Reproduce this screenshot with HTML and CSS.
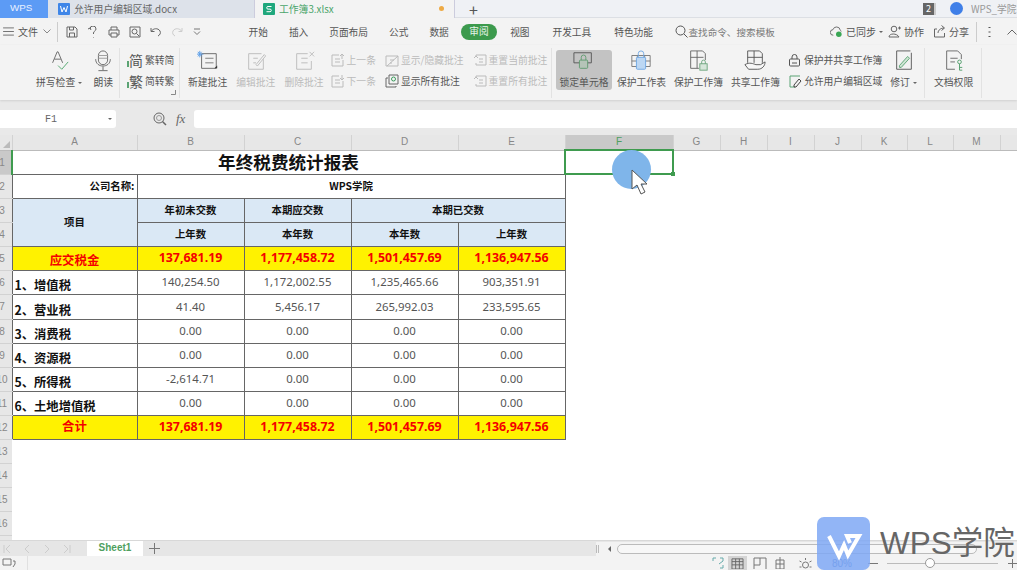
FILE: index.html
```html
<!DOCTYPE html>
<html lang="en">
<head>
    <meta charset="utf-8">
    <title>工作簿3.xlsx</title>
    <link rel="stylesheet" href="styles.css">
</head>
<body>
<div class="page">

    <!-- title bar -->
    <div class="tabbar">
        <div class="tab_wps">WPS</div>
        <div class="tab_doc">
            <svg class="tab_icon" viewBox="0 0 12 12"><rect width="12" height="12" rx="1" fill="#3f86e8"/><path d="M2.5 3 4 9 6 4.5 8 9 9.5 3" fill="none" stroke="#fff"/></svg>
            <span>允许用户编辑区域.docx</span>
        </div>
        <div class="tab_xls">
            <svg class="tab_icon" viewBox="0 0 12 12"><rect width="12" height="12" rx="1" fill="#1fa77c"/><path d="M8.5 3.5H5a1.3 1.3 0 0 0 0 2.6h2a1.3 1.3 0 0 1 0 2.6H3.5" fill="none" stroke="#fff"/></svg>
            <span class="xls_name">工作簿3.xlsx</span>
            <i class="dot"></i>
        </div>
        <div class="tab_plus">+</div>
        <div class="tabbar_right">
            <span class="badge">2</span>
            <span class="avatar"></span>
            <span class="user">WPS_学院</span>
        </div>
    </div>

    <!-- menu row -->
    <div class="menubar">
        <svg class="qa burger" viewBox="0 0 12 10"><path d="M0 1h12M0 5h12M0 9h12" stroke="#666"/></svg>
        <span class="file">文件</span>
        <svg class="qa chev" viewBox="0 0 8 5"><path d="M.5.5 4 4 7.500.5" fill="none" stroke="#888"/></svg>
        <i class="menu_sep"></i>
        <svg class="qa" viewBox="0 0 12 12"><path d="M1 1h8l2 2v8H1zM3.500 1v3h4V1M3.500 11V7h5v4" fill="none" stroke="#666"/></svg>
        <svg class="qa" viewBox="0 0 12 12"><path d="M3 3a3 3 0 0 1 6 0c0 2-2.500 2-2.500 4v1M6.500 11v.5M1 3l2-1 1 2" fill="none" stroke="#666"/></svg>
        <svg class="qa" viewBox="0 0 12 12"><path d="M3 4V1h6v3M3 9H1V4h10v5H9M3 7h6v4H3z" fill="none" stroke="#666"/></svg>
        <svg class="qa" viewBox="0 0 12 12"><path d="M1 1h10v10H1zM3 5.500a2.500 2.500 0 1 0 5 0 2.500 2.500 0 1 0-5 0M7.500 7.500 10 10" fill="none" stroke="#666"/></svg>
        <svg class="qa" viewBox="0 0 12 12"><path d="M1 2v3.500h3.500M1.500 5C3 2.500 8 1.500 10 5c1 2 0 4-2 5" fill="none" stroke="#666"/></svg>
        <svg class="qa" viewBox="0 0 12 12"><path d="M11 2v3.500H7.500M10.500 5C9 2.500 4 1.500 2 5c-1 2 0 4 2 5" fill="none" stroke="#ccc"/></svg>
        <svg class="qa small_qa" viewBox="0 0 8 8"><path d="M1 1h6M1 3.500 4 6.500 7 3.500" fill="none" stroke="#777"/></svg>

        <div class="menu_tabs">
            <span>开始</span><span>插入</span><span>页面布局</span><span>公式</span><span>数据</span>
            <span class="pill">审阅</span>
            <span class="wide">视图</span><span class="wide">开发工具</span><span class="wide">特色功能</span>
        </div>
        <div class="search">
            <svg viewBox="0 0 13 13"><circle cx="5.500" cy="5.500" r="4.500" fill="none" stroke="#555"/><path d="M9 9l3.500 3.500" stroke="#555"/></svg>
            <span>查找命令、搜索模板</span>
        </div>
        <div class="menu_right">
            <svg class="mr_icon" viewBox="0 0 14 13"><path d="M3.500 10.500a3 3 0 0 1-.3-6A4 4 0 0 1 11 5a3 3 0 0 1 1 1.500" fill="none" stroke="#666"/><circle cx="9.500" cy="9.500" r="3" fill="#3aa655"/></svg>
            <span>已同步</span><i class="caret"></i>
            <svg class="mr_icon mr_gap" viewBox="0 0 13 13"><circle cx="6" cy="4" r="2.800" fill="none" stroke="#666"/><path d="M1 12c0-4 8-4 10 0zM10 3h3M11.500 1.500v3" fill="none" stroke="#666"/></svg>
            <span>协作</span>
            <svg class="mr_icon mr_gap2" viewBox="0 0 13 13"><path d="M4 4H1.500v8h10V8M5 8c0-3 3-5 6-5M8.500 .5 11.500 3 8.500 5.500" fill="none" stroke="#666"/></svg>
            <span>分享</span>
            <i class="menu_sep sep_right"></i>
            <svg class="mr_dots" viewBox="0 0 3 12"><path d="M1.500 1v1M1.500 5.500v1M1.500 10v1" stroke="#555" stroke-width="2"/></svg>
            <svg class="mr_up" viewBox="0 0 10 6"><path d="M.5 5.500 5 1l4.500 4.500" fill="none" stroke="#666"/></svg>
        </div>
    </div>

    <!-- ribbon -->
    <div class="ribbon">
        <div class="group g1">
            <div class="big">
                <svg viewBox="0 0 24 24"><path d="M5 14 10 2h1l5 12M7 10h7" fill="none" stroke="#666"/><path d="M11 17l4 4 7-8" fill="none" stroke="#4ea56b"/></svg>
                <span>拼写检查<i class="caret"></i></span>
            </div>
            <div class="big">
                <svg viewBox="0 0 24 24"><rect x="7" y="1" width="10" height="15" rx="5" fill="none" stroke="#666"/><path d="M7 6h10M7 9h10" stroke="#999"/><path d="M4 10c0 10 16 10 16 0M12 18v4M7 22.500h10" fill="none" stroke="#666"/></svg>
                <span>朗读</span>
            </div>
        </div>
        <div class="group g2">
            <div class="smalls">
                <div class="small"><i class="green_arrow"></i><b class="glyph">简</b><span>繁转简</span></div>
                <div class="small"><i class="green_arrow"></i><b class="glyph">繁</b><span>简转繁</span></div>
            </div>
            <svg class="corner" viewBox="0 0 5 5"><path d="M4.500 0v4.500H0" fill="none" stroke="#888"/></svg>
        </div>
        <div class="group g3">
            <div class="big">
                <svg viewBox="0 0 24 24"><path d="M5 4h16v16H5z" fill="none" stroke="#666"/><path d="M9 9h9M9 14h9" stroke="#777"/><path d="M3 1v7M0 4.500h7M1 2l4 5M5 2 1 7" stroke="#5b9ee8"/><path d="M19 20h3v-3z" fill="#333"/></svg>
                <span>新建批注</span>
            </div>
            <div class="big off">
                <svg viewBox="0 0 24 24"><path d="M18 4H4v17h16V10M9 9h5M9 14h3M12 16l9-11 1.500 1.500-9 11z" fill="none" stroke="#bbb"/></svg>
                <span>编辑批注</span>
            </div>
            <div class="big off">
                <svg viewBox="0 0 24 24"><path d="M16 4H4v17h16V12M9 9h7M9 14h7M18 2l5 5M23 2l-5 5" fill="none" stroke="#bbb"/></svg>
                <span>删除批注</span>
            </div>
            <div class="smalls pull">
                <div class="small off"><svg viewBox="0 0 14 14"><path d="M8 2H1v11h11V7M4 6h5M4 9h5M11 1v5M9 3l2-2 2 2" fill="none" stroke="#bbb"/></svg><span>上一条</span></div>
                <div class="small off"><svg viewBox="0 0 14 14"><path d="M8 2H1v11h11V7M4 6h5M4 9h5M11 1v5M9 4l2 2 2-2" fill="none" stroke="#bbb"/></svg><span>下一条</span></div>
            </div>
            <div class="smalls">
                <div class="small off"><svg viewBox="0 0 14 14"><path d="M1 3h12v10H1zM2 13 13 3M5 7h4M5 10h2" fill="none" stroke="#bbb"/></svg><span>显示/隐藏批注</span></div>
                <div class="small"><svg viewBox="0 0 14 14"><path d="M3 4H1v9h10v-1" fill="none" stroke="#666"/><path d="M4 1h9v9H4z" fill="none" stroke="#666"/><circle cx="8.500" cy="5" r="2" fill="none" stroke="#3a9a5b"/></svg><span>显示所有批注</span></div>
            </div>
            <div class="smalls">
                <div class="small off"><svg viewBox="0 0 14 14"><path d="M3 4V2h10v10H3v-2M6 6h4M6 9h4M1 5l2-2 2 2" fill="none" stroke="#bbb"/></svg><span>重置当前批注</span></div>
                <div class="small off"><svg viewBox="0 0 14 14"><path d="M3 4V2h10v10H3v-2M6 6h4M6 9h4M1 5l2-2 2 2" fill="none" stroke="#bbb"/></svg><span>重置所有批注</span></div>
            </div>
        </div>
        <div class="group g4">
            <div class="big locked">
                <svg viewBox="0 0 24 24"><path d="M1 3h19v11H1z" fill="none" stroke="#555"/><rect x="7" y="11" width="9" height="9" rx="1" fill="#b5c4b8" stroke="#5f9a70"/><path d="M9 11V8a2.500 2.500 0 0 1 5 0v3" fill="none" stroke="#5f9a70"/></svg>
                <span>锁定单元格</span>
            </div>
            <div class="big">
                <svg viewBox="0 0 24 24"><path d="M2 6h20v12H2zM8 6v12M16 6v12M2 12h20" fill="none" stroke="#777"/><rect x="7" y="8" width="10" height="13" rx="1" fill="#bcd7f3" stroke="#6ea7e4"/><path d="M9 8V4a3 3 0 0 1 6 0v4" fill="none" stroke="#6ea7e4"/></svg>
                <span>保护工作表</span>
            </div>
            <div class="big">
                <svg viewBox="0 0 24 24"><path d="M17 1H4v19h9M17 1l3 3v7M4 8h14M11 1v19" fill="none" stroke="#666"/><rect x="14" y="15" width="8" height="7" fill="#d6e6da" stroke="#6ba57d"/><path d="M16 15v-2a2 2 0 0 1 4 0v2" fill="none" stroke="#6ba57d"/></svg>
                <span>保护工作簿</span>
            </div>
            <div class="big">
                <svg viewBox="0 0 24 24"><path d="M17 1H4v13M17 1l3 3v10M4 8h16M11 1v13" fill="none" stroke="#555"/><path d="M1 16c5-3 9-1 12 0h5l5-3c0 4-3 8-8 8H5z" fill="#f7f7f7" stroke="#555"/></svg>
                <span>共享工作簿</span>
            </div>
            <div class="smalls">
                <div class="small"><svg viewBox="0 0 14 14"><rect x="1.500" y="6" width="10" height="7" rx="1" fill="none" stroke="#555"/><path d="M4 6V4a2.500 2.500 0 0 1 5 0v2M4 10h5" fill="none" stroke="#555"/></svg><span>保护并共享工作簿</span></div>
                <div class="small"><svg viewBox="0 0 14 14"><path d="M2 2h10M2 2v11M2 13h5" stroke="#5ba374" fill="none"/><path d="M6 11 11 5l2 2-5 6H6z" fill="none" stroke="#444"/></svg><span>允许用户编辑区域</span></div>
            </div>
            <div class="big">
                <svg viewBox="0 0 24 24"><path d="M19 1H4v20h16V3" fill="none" stroke="#555"/><path d="M7 17 16 7l2 2-9 10H7z" fill="#cfe6d4" stroke="#5ba374"/></svg>
                <span>修订<i class="caret"></i></span>
            </div>
        </div>
        <div class="group g5">
            <div class="big">
                <svg viewBox="0 0 24 24"><path d="M16 1H4v20h9M16 1l4 4v5M8 9h8M8 13h5" fill="none" stroke="#666"/><circle cx="18" cy="13" r="2" fill="none" stroke="#4f9c69"/><path d="M18 15v7M18 19h3M18 22h3" fill="none" stroke="#4f9c69"/></svg>
                <span>文档权限</span>
            </div>
        </div>
    </div>

    <!-- formula bar -->
    <div class="formula">
        <div class="namebox"><span>F1</span><i class="caret"></i></div>
        <svg class="zoom_icon" viewBox="0 0 14 14"><circle cx="6" cy="6" r="5" fill="none" stroke="#666"/><circle cx="6" cy="6" r="2.500" fill="none" stroke="#999"/><path d="M9.500 9.500 13 13" stroke="#666" stroke-width="1.500"/></svg>
        <span class="fx">fx</span>
        <div class="input"></div>
    </div>

    <!-- grid -->
    <div class="sheet">
        <table class="grid">
            <colgroup>
                <col class="c_rh"><col class="c_a"><col class="c_n"><col class="c_n"><col class="c_n"><col class="c_n"><col class="c_f">
                <col class="c_g"><col class="c_g"><col class="c_g"><col class="c_g"><col class="c_k"><col class="c_k"><col class="c_g"><col class="c_z">
            </colgroup>
            <tr class="head">
                <th class="corner_cell"><i class="tri"></i></th><th>A</th><th>B</th><th>C</th><th>D</th><th>E</th>
                <th class="head_on">F</th><th>G</th><th>H</th><th>I</th><th>J</th><th>K</th><th>L</th><th>M</th><th></th>
            </tr>
            <tr><th class="rh rh_on"><span>1</span></th><td colspan="5" class="title">年终税费统计报表</td><td class="selected"></td></tr>
            <tr><th class="rh"><span>2</span></th><td class="right b">公司名称:</td><td colspan="4" class="b">WPS学院</td></tr>
            <tr class="blue"><th class="rh"><span>3</span></th><td rowspan="2" class="b">项目</td><td class="b">年初未交数</td><td class="b">本期应交数</td><td colspan="2" class="b">本期已交数</td></tr>
            <tr class="blue"><th class="rh"><span>4</span></th><td class="b">上年数</td><td class="b">本年数</td><td class="b">本年数</td><td class="b">上年数</td></tr>
            <tr class="total"><th class="rh"><span>5</span></th><td class="low">应交税金</td><td>137,681.19</td><td>1,177,458.72</td><td>1,501,457.69</td><td>1,136,947.56</td></tr>
            <tr><th class="rh"><span>6</span></th><td class="item">1、增值税</td><td>140,254.50</td><td>1,172,002.55</td><td>1,235,465.66</td><td>903,351.91</td></tr>
            <tr class="tall"><th class="rh"><span>7</span></th><td class="item">2、营业税</td><td>41.40</td><td>5,456.17</td><td>265,992.03</td><td>233,595.65</td></tr>
            <tr><th class="rh"><span>8</span></th><td class="item">3、消费税</td><td>0.00</td><td>0.00</td><td>0.00</td><td>0.00</td></tr>
            <tr><th class="rh"><span>9</span></th><td class="item">4、资源税</td><td>0.00</td><td>0.00</td><td>0.00</td><td>0.00</td></tr>
            <tr><th class="rh"><span>10</span></th><td class="item">5、所得税</td><td>-2,614.71</td><td>0.00</td><td>0.00</td><td>0.00</td></tr>
            <tr><th class="rh"><span>11</span></th><td class="item">6、土地增值税</td><td>0.00</td><td>0.00</td><td>0.00</td><td>0.00</td></tr>
            <tr class="total"><th class="rh"><span>12</span></th><td>合计</td><td>137,681.19</td><td>1,177,458.72</td><td>1,501,457.69</td><td>1,136,947.56</td></tr>
            <tr class="empty"><th class="rh"><span>13</span></th></tr>
            <tr class="empty"><th class="rh"><span>14</span></th></tr>
            <tr class="empty"><th class="rh"><span>15</span></th></tr>
            <tr class="empty"><th class="rh"><span>16</span></th></tr>
            <tr class="empty"><th class="rh"><span>17</span></th></tr>
        </table>
    </div>

    <!-- sheet tabs -->
    <div class="sheetbar">
        <div class="nav">
            <svg viewBox="0 0 8 10"><path d="M1 1v8M7 1 3 5l4 4" fill="none" stroke="#ccc"/></svg>
            <svg viewBox="0 0 8 10"><path d="M6 1 2 5l4 4" fill="none" stroke="#ccc"/></svg>
            <svg viewBox="0 0 8 10"><path d="M2 1l4 4-4 4" fill="none" stroke="#ccc"/></svg>
            <svg viewBox="0 0 8 10"><path d="M7 1v8M1 1l4 4-4 4" fill="none" stroke="#ccc"/></svg>
        </div>
        <div class="sheet_tab">Sheet1</div>
        <svg class="sheet_add" viewBox="0 0 11 11"><path d="M5.500 0v11M0 5.500h11" stroke="#777"/></svg>
        <div class="hscroll">
            <i class="grip"></i>
            <i class="left_arrow"></i>
            <div class="thumb"></div>
        </div>
    </div>

    <!-- status bar -->
    <div class="status">
        <svg class="st_left" viewBox="0 0 14 10"><path d="M1 1h8v6H1zM11 3h2v3l-2 3" fill="none" stroke="#777"/></svg>
        <i class="st_sep"></i>
        <div class="st_right">
            <svg class="st_fit" viewBox="0 0 12 12"><path d="M1 4V1h3M11 8v3H8M8 1h3v3L7 7" fill="none" stroke="#6aa"/></svg>
            <svg class="st_on" viewBox="0 0 16 13"><path d="M2 2h12v11H2zM2 5h12M2 8.500h12M6 2v11M10 2v11" fill="none" stroke="#666"/></svg>
            <svg class="st_page" viewBox="0 0 14 12"><path d="M1 1h12M1 1v11M7 1v7H1M13 1v11" fill="none" stroke="#777"/></svg>
            <svg class="st_read" viewBox="0 0 14 12"><path d="M3 3h8v9H3zM3 7h8M7 0v12" fill="none" stroke="#777"/></svg>
            <svg class="st_eye" viewBox="0 0 14 12"><circle cx="7" cy="8" r="3" fill="none" stroke="#777"/><path d="M7 1v2M1 4l2 1M13 4l-2 1M1 10h2M13 10h-2" stroke="#777"/></svg>
            <span class="zoom_val">80%</span>
            <div class="slider"><i class="minus"></i><div class="track"><i class="knob"></i></div><i class="plus"></i></div>
        </div>
    </div>

    <!-- things lying over the sheet -->
    <div class="handle"></div>
    <div class="click_dot"></div>
    <svg class="cursor" viewBox="0 0 16 27"><path d="M1 1v19l5-4 4 9 4-2-4-8h6z" fill="#fff" stroke="#555"/></svg>
    <div class="mark">
        <svg class="mark_logo" viewBox="0 0 53 53"><rect width="53" height="53" rx="7" fill="#7fa8f5" opacity=".85"/><path d="M12 19 22 39 27 28 31 38 42 19H30L33 26" fill="none" stroke="#fff" stroke-width="4"/></svg>
        <span class="mark_text">WPS学院</span>
    </div>
</div>
</body>
</html>
```

FILE: styles.css
```css
*{
    box-sizing:border-box;
}
body{
    margin:0;
    font-family:"Noto Sans CJK SC","Noto Sans",sans-serif;
    color:#555;
    font-size:10px;
    overflow:hidden;
}
i{
    display:block;
    font-style:normal;
}
.page{
    position:relative;
    width:1017px;
    height:570px;
    overflow:hidden;
    display:flex;
    flex-direction:column;
    background-color:#f3f3f3;
}

/* title bar */
.tabbar{
    height:18px;
    display:flex;
    align-items:center;
    background-color:#eff1f5;
    border-bottom:1px solid #dcdfe4;
    font-size:9.8px;
}
.tab_wps{
    width:48px;
    height:18px;
    padding-left:10px;
    line-height:16px;
    background-color:#5c9bf5;
    color:#e8f0ff;
    font-family:"Liberation Sans",sans-serif;
}
.tab_doc{
    width:206px;
    height:18px;
    padding-left:10px;
    display:flex;
    align-items:center;
    background-color:#dde2ea;
    color:#666;
}
.tab_icon{
    width:12px;
    height:12px;
    margin-right:4px;
    flex:none;
}
.tab_xls{
    width:201px;
    height:18px;
    padding-left:8px;
    display:flex;
    align-items:center;
    background-color:#f3f3f3;
    border-left:1px solid #ccd;
    border-right:1px solid #ccd;
}
.xls_name{
    color:#4aa56b;
}
.dot{
    width:5px;
    height:5px;
    margin-left:auto;
    margin-right:10px;
    border-radius:3px;
    background-color:#eeaa44;
}
.tab_plus{
    margin-left:14px;
    font-size:16px;
    line-height:18px;
    height:18px;
    color:#555;
}
.tabbar_right{
    margin-left:auto;
    display:flex;
    align-items:center;
}
.badge{
    width:13px;
    height:12px;
    line-height:12px;
    text-align:center;
    background-color:#666;
    color:#fff;
    font-size:9px;
    border-right:2px solid #ccc;
}
.avatar{
    width:13px;
    height:13px;
    margin-left:14px;
    border-radius:7px;
    background-color:#3f7fe8;
}
.user{
    margin-left:8px;
    width:46px;
    white-space:nowrap;
    overflow:hidden;
    color:#999;
}

/* menu row */
.menubar{
    height:27px;
    padding-left:3px;
    display:flex;
    align-items:center;
    background-color:#f3f3f3;
}
.qa{
    width:12px;
    height:12px;
    margin-right:9px;
    flex:none;
}
.burger{
    width:11px;
    height:9px;
    margin-right:4px;
}
.file{
    width:20px;
}
.chev{
    width:8px;
    height:5px;
    margin-left:5px;
    margin-right:6px;
}
.menu_sep{
    width:1px;
    height:20px;
    margin-right:8px;
    background-color:#ccc;
}
.small_qa{
    width:8px;
    height:8px;
    margin-left:1px;
    margin-right:0;
}
.menu_tabs{
    margin-left:37px;
    display:flex;
    align-items:center;
    font-size:9.7px;
    color:#555;
}
.menu_tabs span{
    padding:0 10.5px;
}
.menu_tabs .wide{
    padding:0 11.5px;
}
.menu_tabs .pill{
    height:16px;
    line-height:15px;
    margin:0 2px;
    padding:0 8px;
    border-radius:8px;
    background-color:#3c9a4d;
    color:#e8f5ea;
}
.search{
    margin-left:10px;
    display:flex;
    align-items:center;
    font-size:9.6px;
    color:#777;
}
.search svg{
    width:13px;
    height:13px;
    margin-right:1px;
}
.menu_right{
    margin-left:auto;
    display:flex;
    align-items:center;
}
.mr_icon{
    width:13px;
    height:13px;
    margin-right:3px;
}
.mr_gap{
    margin-left:5px;
}
.mr_gap2{
    margin-left:9px;
}
.caret{
    display:inline-block;
    width:0;
    height:0;
    margin-left:3px;
    vertical-align:middle;
    border-left:2px solid transparent;
    border-right:2px solid transparent;
    border-top:2px solid #666;
}
.sep_right{
    margin:0 11px 0 7px;
}
.mr_dots{
    width:3px;
    height:12px;
}
.mr_up{
    width:10px;
    height:6px;
    margin-left:16px;
    margin-right:0;
}

/* ribbon */
.ribbon{
    height:55px;
    display:flex;
    background-color:#f3f3f3;
    box-shadow:0 1px 2px #d0d0d0;
    position:relative;
    font-size:9.8px;
    white-space:nowrap;
}
.group{
    display:flex;
    height:50px;
    margin-top:3px;
    border-right:1px solid #e2e2e2;
    position:relative;
}
.big{
    height:43px;
    padding-top:2px;
    display:flex;
    flex-direction:column;
    align-items:center;
    color:#555;
}
.big svg{
    width:22px;
    height:22px;
    margin-bottom:3px;
}
.big span{
    line-height:14px;
}
.big.off,
.small.off{
    color:#bbb;
}
.smalls{
    margin-top:2px;
    display:flex;
    flex-direction:column;
    gap:1px;
}
.smalls.pull{
    margin-left:-2px;
}
.small{
    height:20px;
    display:flex;
    align-items:center;
    gap:2px;
}
.small svg{
    width:14px;
    height:14px;
    flex:none;
}
.green_arrow{
    width:2px;
    height:6px;
    margin-top:7px;
    margin-right:-2px;
    background-color:#5ba374;
}
.glyph{
    width:14px;
    font-size:14px;
    line-height:16px;
    font-weight:normal;
    color:#555;
}
.corner{
    position:absolute;
    right:3px;
    bottom:3px;
    width:5px;
    height:5px;
}
.g1{
    width:120px;
    padding-left:36px;
    gap:10px;
}
.g2{
    width:60px;
    padding-left:7px;
}
.g3{
    width:372px;
    padding-left:8px;
    gap:9px;
}
.g4{
    width:373px;
    padding-left:4px;
    gap:8px;
}
.g5{
    width:57px;
    padding-left:9px;
}
.big.locked{
    width:56px;
    height:40px;
    margin-top:2px;
    padding-top:0;
    margin-right:-3px;
    border-radius:3px;
    background-color:#c3c3c3;
}

/* formula bar */
.formula{
    height:35px;
    padding:10px 0 7px;
    display:flex;
    align-items:center;
    background-color:#e9e9e9;
}
.namebox{
    width:116px;
    height:18px;
    padding-right:14px;
    display:flex;
    align-items:center;
    justify-content:center;
    position:relative;
    border-radius:0 3px 3px 0;
    background-color:#fff;
    font-family:"Liberation Mono",monospace;
    font-size:10px;
    color:#666;
}
.namebox .caret{
    position:absolute;
    right:4px;
    top:8px;
}
.zoom_icon{
    width:14px;
    height:14px;
    margin-left:37px;
}
.fx{
    margin-left:9px;
    width:18px;
    font-family:"Liberation Serif",serif;
    font-style:italic;
    font-size:13px;
    color:#666;
}
.input{
    flex:1;
    height:18px;
    border-radius:3px 0 0 3px;
    background-color:#fff;
}

/* grid */
.sheet{
    height:405px;
    overflow:hidden;
    background-color:#fff;
}
.grid{
    table-layout:fixed;
    width:1017px;
    border-collapse:collapse;
}
.c_rh{width:12px;}
.c_a{width:125px;}
.c_n{width:107px;}
.c_f{width:108px;}
.c_g{width:47px;}
.c_k{width:46px;}
.c_z{width:17px;}
.head th{
    padding:0;
    font-family:"Liberation Sans",sans-serif;
    font-size:10px;
    line-height:14px;
    font-weight:normal;
    color:#888;
    background-color:#e7e7e7;
    border-right:1px solid #d2d2d2;
    border-bottom:1px solid #bbb;
}
.head .head_on{
    background-color:#c9c9c9;
    color:#4f9f60;
}
.corner_cell{
    position:relative;
}
.tri{
    position:absolute;
    right:2px;
    bottom:2px;
    border-left:7px solid transparent;
    border-bottom:7px solid #bbb;
}
.grid tr{
    height:24px;
}
.grid tr.head{
    height:15px;
}
.grid tr.tall{
    height:25px;
}
.rh{
    padding:0;
    font-family:"Liberation Sans",sans-serif;
    font-size:10px;
    font-weight:normal;
    color:#888;
    background-color:#e7e7e7;
    border-bottom:1px solid #d2d2d2;
    overflow:hidden;
}
.rh span{
    display:block;
    width:20px;
    margin-left:-8px;
    text-align:center;
}
.rh_on{
    background-color:#c9c9c9;
    border-right:2px solid #3f9b4f;
}
.grid td{
    padding:0;
    border:1px solid #666;
    text-align:center;
    font-family:"Noto Sans","Noto Sans CJK SC",sans-serif;
    font-size:11.4px;
    line-height:16px;
    color:#555;
    white-space:nowrap;
}
.grid td.selected{
    border:2px solid #3f9b4f;
}
.grid td.title{
    font-family:"Noto Sans CJK SC",sans-serif;
    font-size:17.6px;
    line-height:20px;
    font-weight:bold;
    color:#111;
}
.grid td.b{
    font-family:"Noto Sans CJK SC",sans-serif;
    font-size:10.4px;
    font-weight:bold;
    color:#111;
}
.grid td.right{
    text-align:right;
    padding-right:2px;
}
.grid td.item{
    text-align:left;
    vertical-align:bottom;
    padding-left:2px;
    font-family:"Noto Sans CJK SC",sans-serif;
    font-size:12.3px;
    line-height:18px;
    font-weight:bold;
    color:#111;
}
.blue td{
    background-color:#dae8f5;
}
.grid .total td{
    background-color:#fff200;
    color:#f40000;
    font-family:"Noto Sans","Noto Sans CJK SC",sans-serif;
    font-size:12.4px;
    font-weight:bold;
}
.grid .total td.low{
    vertical-align:bottom;
    line-height:18px;
}

/* sheet tabs */
.sheetbar{
    height:16px;
    display:flex;
    align-items:center;
    background-color:#e6e6e6;
    border-top:1px solid #d8d8d8;
}
.nav{
    width:87px;
    padding-left:3px;
    display:flex;
    gap:12px;
}
.nav svg{
    width:8px;
    height:10px;
}
.sheet_tab{
    width:56px;
    height:15px;
    line-height:14px;
    text-align:center;
    background-color:#fff;
    color:#4f9f60;
    font-family:"Liberation Sans",sans-serif;
    font-weight:bold;
    font-size:10px;
}
.sheet_add{
    width:11px;
    height:11px;
    margin-left:6px;
}
.hscroll{
    margin-left:auto;
    width:421px;
    height:14px;
    display:flex;
    align-items:center;
    background-color:#f3f3f3;
}
.grip{
    width:3px;
    height:8px;
    border-left:1px solid #bbb;
    border-right:1px solid #bbb;
}
.left_arrow{
    margin-left:9px;
    border-top:3px solid transparent;
    border-bottom:3px solid transparent;
    border-right:3px solid #666;
}
.thumb{
    width:360px;
    height:10px;
    margin-left:6px;
    border:1px solid #bbb;
    border-radius:5px;
    background-color:#f7f7f7;
}

/* status bar */
.status{
    height:14px;
    display:flex;
    align-items:center;
    background-color:#f3f3f3;
    overflow:hidden;
}
.st_left{
    width:14px;
    height:10px;
    margin-left:2px;
}
.st_sep{
    width:1px;
    height:14px;
    margin-left:11px;
    background-color:#e0e0e0;
}
.st_right{
    margin-left:auto;
    display:flex;
    align-items:center;
    height:14px;
}
.st_right svg{
    height:12px;
    flex:none;
}
.st_fit{
    width:12px;
    margin-right:4px;
}
.st_right .st_on{
    width:19px;
    height:14px;
    margin-right:6px;
    padding:1px;
    background-color:#d4d4d4;
}
.st_page{
    width:14px;
    margin-right:6px;
}
.st_read{
    width:14px;
    margin-right:11px;
}
.st_eye{
    width:15px;
    margin-right:19px;
}
.zoom_val{
    width:24px;
    color:#3f72c4;
    font-family:"Liberation Sans",sans-serif;
    font-size:10px;
}
.slider{
    margin-left:12px;
    display:flex;
    align-items:center;
}
.minus{
    width:10px;
    height:1px;
    background-color:#777;
}
.track{
    width:111px;
    height:1px;
    margin:0 9px;
    position:relative;
    background-color:#bbb;
}
.knob{
    position:absolute;
    left:38px;
    top:-5px;
    width:10px;
    height:10px;
    border-radius:5px;
    border:1px solid #999;
    background-color:#fff;
}
.plus{
    width:10px;
    height:9px;
    background:linear-gradient(#777,#777) center/9px 1px no-repeat,linear-gradient(#777,#777) center/1px 9px no-repeat;
}

/* overlays */
.handle{
    position:absolute;
    left:671px;
    top:172px;
    width:4px;
    height:4px;
    background-color:#3f9b4f;
}
.click_dot{
    position:absolute;
    left:612px;
    top:150px;
    width:39px;
    height:39px;
    border-radius:20px;
    background-color:#7fb5ea;
}
.cursor{
    position:absolute;
    left:631px;
    top:169px;
    width:16px;
    height:27px;
}
.mark{
    position:absolute;
    left:817px;
    top:517px;
    display:flex;
    align-items:center;
    gap:10px;
}
.mark_logo{
    width:53px;
    height:53px;
    flex:none;
}
.mark_text{
    font-family:"Liberation Sans","Noto Sans CJK SC",sans-serif;
    font-size:31.5px;
    line-height:53px;
    color:#666;
    white-space:nowrap;
}
```
